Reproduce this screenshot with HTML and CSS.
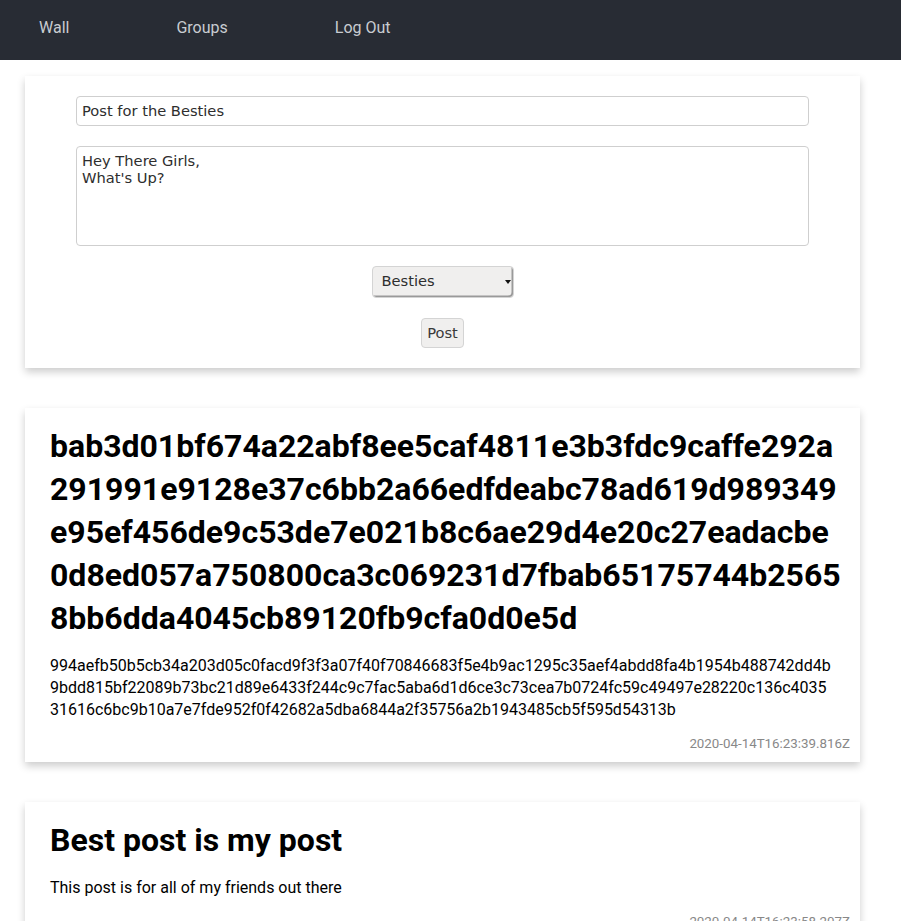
FILE: index.html
```html
<!DOCTYPE html>
<html lang="en">
<head>
<meta charset="utf-8">
<title>Wall</title>
<link rel="stylesheet" href="styles.css">
</head>
<body>
<nav class="topnav">
  <a class="navlink" href="#">Wall</a>
  <a class="navlink" href="#">Groups</a>
  <a class="navlink" href="#">Log Out</a>
</nav>
<main class="feed">
  <form class="card composer">
    <input class="field title-field" type="text" value="Post for the Besties">
    <textarea class="field body-field">Hey There Girls,
What's Up?</textarea>
    <span class="select-wrap">
      <select class="group-select">
        <option>Besties</option>
      </select>
    </span>
    <button class="post-btn" type="button">Post</button>
  </form>

  <article class="card post">
    <h1 class="post-title">bab3d01bf674a22abf8ee5caf4811e3b3fdc9caffe292a<br>291991e9128e37c6bb2a66edfdeabc78ad619d989349<br>e95ef456de9c53de7e021b8c6ae29d4e20c27eadacbe<br>0d8ed057a750800ca3c069231d7fbab65175744b2565<br>8bb6dda4045cb89120fb9cfa0d0e5d</h1>
    <p class="post-body">994aefb50b5cb34a203d05c0facd9f3f3a07f40f70846683f5e4b9ac1295c35aef4abdd8fa4b1954b488742dd4b<br>9bdd815bf22089b73bc21d89e6433f244c9c7fac5aba6d1d6ce3c73cea7b0724fc59c49497e28220c136c4035<br>31616c6bc9b10a7e7fde952f0f42682a5dba6844a2f35756a2b1943485cb5f595d54313b</p>
    <div class="post-time">2020-04-14T16:23:39.816Z</div>
  </article>

  <article class="card post">
    <h1 class="post-title">Best post is my post</h1>
    <p class="post-body">This post is for all of my friends out there</p>
    <div class="post-time">2020-04-14T16:23:58.207Z</div>
  </article>
</main>
</body>
</html>
```
FILE: styles.css
```css
html, body {
  margin: 0;
  padding: 0;
  background: #ffffff;
}

body {
  font-family: Roboto, "Liberation Sans", sans-serif;
  color: #000;
}

.topnav {
  box-sizing: border-box;
  height: 60px;
  background: #282c34;
  display: flex;
  gap: 107px;
  padding: 18px 0 0 39px;
}

.navlink {
  color: #c9ccd1;
  text-decoration: none;
  font-size: 16px;
  line-height: 19px;
}

.feed {
  display: flex;
  flex-direction: column;
  gap: 40px;
  padding: 16px 41px 40px 25px;
}

.card {
  background: #fff;
  box-shadow: 0 4px 8px rgba(0, 0, 0, 0.2);
}

.composer {
  display: flex;
  flex-direction: column;
  align-items: center;
  gap: 20px;
  padding: 20px 51px;
  margin: 0;
}

.field {
  box-sizing: border-box;
  width: 100%;
  border: 1px solid #cfcfcf;
  border-radius: 4px;
  font-family: "DejaVu Sans", sans-serif;
  font-size: 14.67px;
  color: #2e2e2e;
  background: #fff;
  margin: 0;
  outline: none;
}

.title-field {
  height: 30px;
  padding: 0 5px 1px;
}

.body-field {
  height: 100px;
  padding: 5px;
  resize: none;
  line-height: 17px;
}

.select-wrap {
  position: relative;
  display: inline-block;
}

.select-wrap::after {
  content: "";
  position: absolute;
  right: 3px;
  top: 14px;
  border-left: 3px solid transparent;
  border-right: 3px solid transparent;
  border-top: 4px solid #111;
  pointer-events: none;
}

.group-select {
  appearance: none;
  -webkit-appearance: none;
  box-sizing: border-box;
  width: 142px;
  height: 32px;
  padding: 0 9px 3px;
  border: 1px solid #d4d4d4;
  border-radius: 4px;
  background: #f0efee;
  box-shadow: inset -2px -2px 0 -0.5px #9a9a9a;
  font-family: "DejaVu Sans", sans-serif;
  font-size: 14.67px;
  color: #2e2e2e;
  margin: 0;
}

.post-btn {
  box-sizing: border-box;
  height: 30px;
  width: 43px;
  padding: 0 0 2px;
  border: 1px solid #d4d4d4;
  border-radius: 4px;
  background: #f0efee;
  font-family: "DejaVu Sans", sans-serif;
  font-size: 14.67px;
  color: #3a3a3a;
}

.post {
  padding: 17px 10px 10px 25px;
}

.post-title {
  margin: 0;
  padding-right: 5px;
  font-size: 32px;
  font-weight: 700;
  line-height: 43px;
  word-break: break-all;
}

.post-body {
  margin: 15px 0;
  padding-right: 5px;
  font-size: 16px;
  line-height: 22px;
  word-break: break-all;
}

.post-time {
  text-align: right;
  font-size: 13.33px;
  line-height: 16px;
  color: #888;
}
```
